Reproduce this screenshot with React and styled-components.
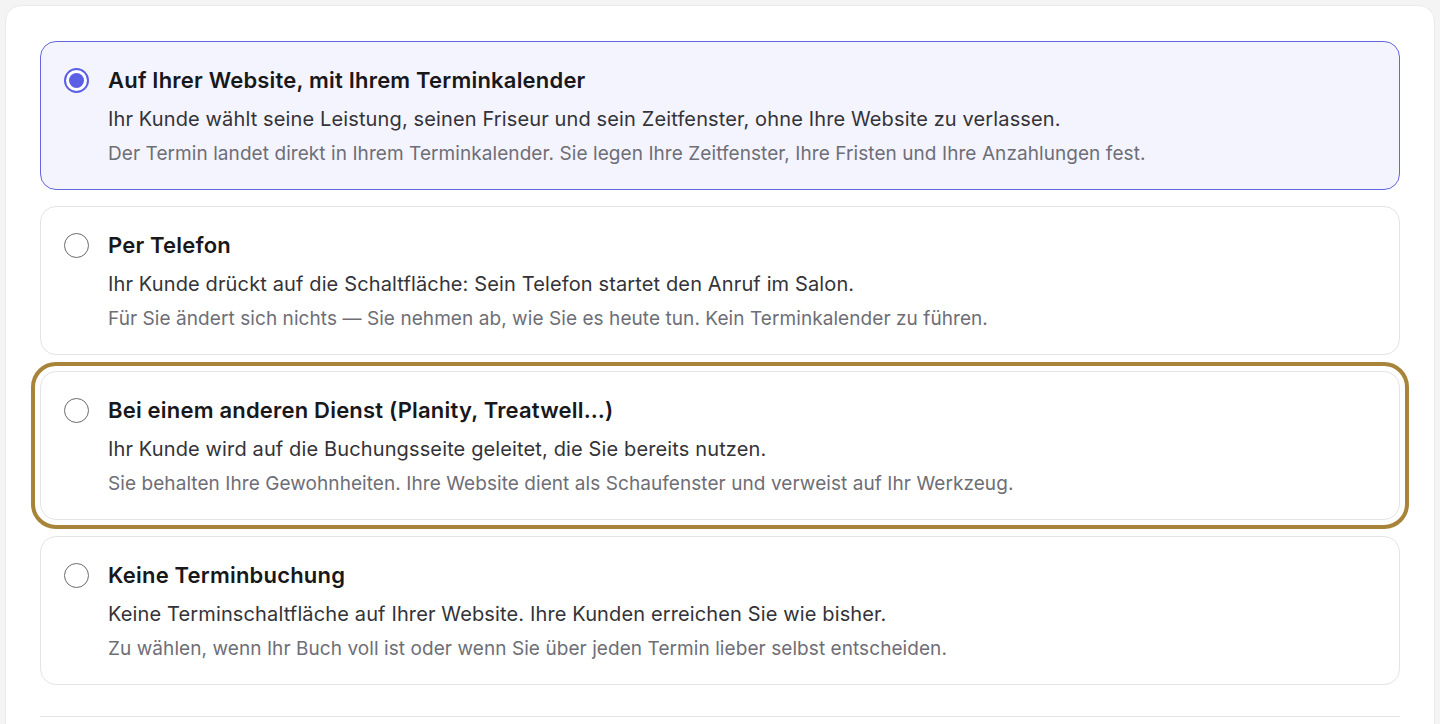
import React from 'react'
import { styled, createGlobalStyle } from 'styled-components'

const GlobalStyle = createGlobalStyle`
  * { box-sizing: border-box; }
  body {
    margin: 0;
    background: #f4f4f5;
    font-family: Inter, "Noto Sans", sans-serif;
    -webkit-font-smoothing: antialiased;
  }
`

const Page = styled.div`
  padding: 5px 5px 0 5px;
  height: 724px;
  overflow: hidden;
`

const Panel = styled.div`
  background: #fff;
  border: 1px solid #e9e9ec;
  border-radius: 16px;
  padding: 35px 34px 0 34px;
  min-height: 740px;
`

const List = styled.div`
  display: flex;
  flex-direction: column;
  gap: 16px;
`

const Option = styled.label`
  display: flex;
  gap: 19px;
  padding: 23px 24px 22px 23px;
  border-radius: 16px;
  border: 1px solid ${({ $selected }) => ($selected ? '#6366e0' : '#e4e4e7')};
  background: ${({ $selected }) => ($selected ? '#f4f4ff' : '#fff')};
  outline: ${({ $focused }) => ($focused ? '4px solid #a7843a' : 'none')};
  outline-offset: 5px;
  cursor: pointer;
`

const Radio = styled.span`
  flex: none;
  width: 25px;
  height: 25px;
  margin-top: 3px;
  border-radius: 50%;
  border: ${({ $checked }) => ($checked ? '2px solid #5b5fe6' : '1.5px solid #6b6b6f')};
  background: #fff;
  display: flex;
  align-items: center;
  justify-content: center;
  &::after {
    content: '';
    display: ${({ $checked }) => ($checked ? 'block' : 'none')};
    width: 15px;
    height: 15px;
    border-radius: 50%;
    background: #5b5fe6;
  }
`

const Body = styled.div`
  display: flex;
  flex-direction: column;
  white-space: nowrap;
`

const Title = styled.span`
  font-size: 22px;
  line-height: 30px;
  font-weight: 600;
  letter-spacing: 0.2px;
  color: #18181b;
`

const Lead = styled.span`
  margin-top: 10px;
  font-size: 20px;
  line-height: 28px;
  letter-spacing: 0.13px;
  color: #333338;
`

const Note = styled.span`
  margin-top: 8px;
  font-size: 19px;
  line-height: 26px;
  letter-spacing: 0.07px;
  color: #6e6e76;
`

const Divider = styled.hr`
  margin: 31px 0 0 0;
  border: none;
  border-top: 1px solid #e4e4e7;
`

const options = [
  {
    title: 'Auf Ihrer Website, mit Ihrem Terminkalender',
    lead: 'Ihr Kunde wählt seine Leistung, seinen Friseur und sein Zeitfenster, ohne Ihre Website zu verlassen.',
    note: 'Der Termin landet direkt in Ihrem Terminkalender. Sie legen Ihre Zeitfenster, Ihre Fristen und Ihre Anzahlungen fest.',
  },
  {
    title: 'Per Telefon',
    lead: 'Ihr Kunde drückt auf die Schaltfläche: Sein Telefon startet den Anruf im Salon.',
    note: 'Für Sie ändert sich nichts — Sie nehmen ab, wie Sie es heute tun. Kein Terminkalender zu führen.',
  },
  {
    title: 'Bei einem anderen Dienst (Planity, Treatwell…)',
    lead: 'Ihr Kunde wird auf die Buchungsseite geleitet, die Sie bereits nutzen.',
    note: 'Sie behalten Ihre Gewohnheiten. Ihre Website dient als Schaufenster und verweist auf Ihr Werkzeug.',
  },
  {
    title: 'Keine Terminbuchung',
    lead: 'Keine Terminschaltfläche auf Ihrer Website. Ihre Kunden erreichen Sie wie bisher.',
    note: 'Zu wählen, wenn Ihr Buch voll ist oder wenn Sie über jeden Termin lieber selbst entscheiden.',
  },
]

const App = () => {
  const selected = 0
  const focused = 2
  return (
    <Page>
      <GlobalStyle />
      <Panel>
        <List>
          {options.map((o, i) => (
            <Option key={o.title} $selected={i === selected} $focused={i === focused}>
              <Radio $checked={i === selected} />
              <Body>
                <Title>{o.title}</Title>
                <Lead>{o.lead}</Lead>
                <Note>{o.note}</Note>
              </Body>
            </Option>
          ))}
        </List>
        <Divider />
      </Panel>
    </Page>
  )
}

export default App
